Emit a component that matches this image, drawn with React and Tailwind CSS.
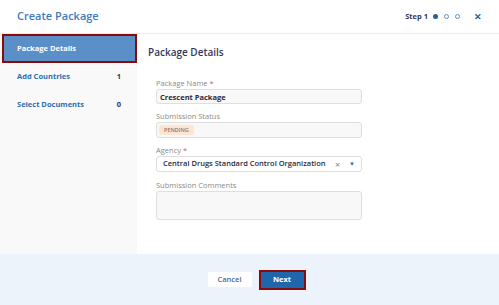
import { useState } from "react";

const steps = [
  { label: "Package Details", count: null },
  { label: "Add Countries", count: 1 },
  { label: "Select Documents", count: 0 },
];

export default function App() {
  let [active] = useState(0);
  let [name, setName] = useState("Crescent Package");
  let [comments, setComments] = useState("");

  return (
    <div className="w-[499px] h-[305px] bg-white flex flex-col overflow-hidden font-['Open_Sans',sans-serif]">
      {/* header */}
      <div className="h-[34px] border-b border-[#e3ebf3] flex items-center justify-between pl-[17px] pr-[17px]">
        <h1 className="text-[11px] font-semibold text-[#3e7bbd]">Create Package</h1>
        <div className="flex items-center">
          <span className="text-[7.5px] font-bold text-[#36365a] mr-[5px]">Step 1</span>
          <span className="w-[5px] h-[5px] rounded-full bg-[#2c5d98] mr-[6px]"></span>
          <span className="w-[5px] h-[5px] rounded-full border border-[#5f8fc4] mr-[6px]"></span>
          <span className="w-[5px] h-[5px] rounded-full border border-[#5f8fc4]"></span>
          <span className="ml-[14px] text-[9px] font-bold text-[#2c5d98] leading-none">✕</span>
        </div>
      </div>

      {/* body */}
      <div className="flex-1 flex">
        <div className="w-[137px] bg-[#f9f9f9]">
          {steps.map((s, i) =>
            i === active ? (
              <div
                key={s.label}
                className="ml-[2px] h-[29px] border-2 border-[#8b0a0a] bg-[#5a8fc8] flex items-center pl-[13px]"
              >
                <span className="text-[7.5px] font-bold text-white">{s.label}</span>
              </div>
            ) : (
              <div key={s.label} className="h-[28px] flex items-center justify-between pl-[17px] pr-[16px]">
                <span className="text-[7.5px] font-bold text-[#2e6db0]">{s.label}</span>
                <span className="text-[7.5px] font-bold text-[#36365a]">{s.count}</span>
              </div>
            )
          )}
        </div>

        <div className="flex-1 pl-[11px] pt-[9px]">
          <h2 className="text-[10px] font-semibold text-[#36365a] leading-[18px]">Package Details</h2>
          <form className="ml-[8px] mt-[16px] w-[206px] flex flex-col">
            <label className="text-[7.5px] text-[#8a8a8a] leading-[12px]">
              Package Name <span className="text-[#e05a5a]">*</span>
            </label>
            <input
              className="h-[15px] rounded-[3px] border border-[#dedede] bg-[#f8f8f8] px-[3px] text-[7.5px] font-bold text-[#2a2a40] outline-none"
              value={name}
              onChange={(e) => setName(e.target.value)}
            />

            <label className="mt-[6px] text-[7.5px] text-[#8a8a8a] leading-[12px]">Submission Status</label>
            <div className="h-[16px] rounded-[3px] border border-[#dedede] bg-[#f8f8f8] flex items-center px-[2px]">
              <span className="bg-[#fbe6d6] rounded-[2px] px-[5px] text-[5.5px] font-semibold text-[#a0705a] leading-[10px]">
                PENDING
              </span>
            </div>

            <label className="mt-[6px] text-[7.5px] text-[#8a8a8a] leading-[12px]">
              Agency <span className="text-[#e05a5a]">*</span>
            </label>
            <div className="h-[16px] rounded-[3px] border border-[#dedede] bg-white flex items-center pl-[6px] pr-[6px]">
              <span className="flex-1 text-[7.5px] font-semibold text-[#2a2a40] whitespace-nowrap">
                Central Drugs Standard Control Organization
              </span>
              <span className="text-[9px] text-[#888] leading-none mr-[9px]">×</span>
              <span className="text-[6px] text-[#2e6db0] leading-none">▼</span>
            </div>

            <label className="mt-[7px] text-[7.5px] text-[#8a8a8a] leading-[12px]">Submission Comments</label>
            <textarea
              className="h-[29px] rounded-[3px] border border-[#dedede] bg-[#f8f8f8] resize-none outline-none text-[7.5px] px-[3px]"
              value={comments}
              onChange={(e) => setComments(e.target.value)}
            />
          </form>
        </div>
      </div>

      {/* footer */}
      <div className="h-[51px] bg-[#edf3fa] flex items-center justify-center pl-[14px]">
        <button
          type="button"
          className="w-[44px] h-[15px] rounded-[2px] bg-white text-[7.5px] font-semibold text-[#4f6b93] mr-[7px]"
        >
          Cancel
        </button>
        <button
          type="button"
          className="w-[47px] h-[20px] border-2 border-[#8b0a0a] bg-[#1f66ad] text-[7.5px] font-bold text-white"
        >
          Next
        </button>
      </div>
    </div>
  );
}
